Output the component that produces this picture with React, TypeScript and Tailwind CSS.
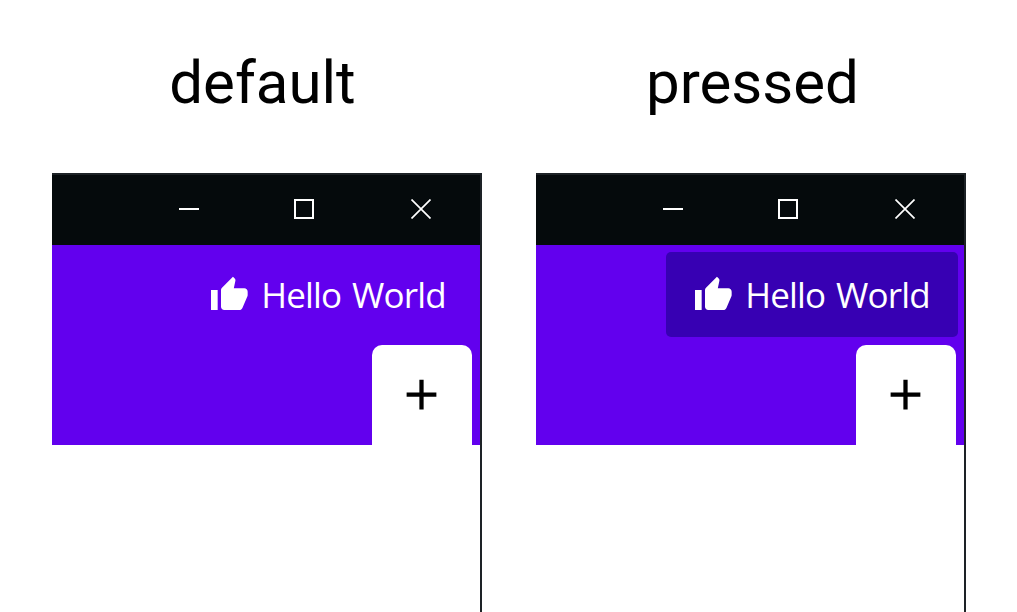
const ThumbUp = () => (
  <svg viewBox="-0.2 0 24 24" className="size-10 shrink-0" fill="#fff">
    <path d="M1 21h4V9H1v12zm22-11c0-1.1-.9-2-2-2h-6.31l.95-4.57.03-.32c0-.41-.17-.79-.44-1.06L14.17 1 7.59 7.59C7.22 7.95 7 8.45 7 9v10c0 1.1.9 2 2 2h9c.83 0 1.54-.5 1.84-1.22l3.02-7.05c.09-.23.14-.47.14-.73v-2z" />
  </svg>
);

const TitleBar = () => (
  <div className="flex h-[70px] items-start bg-[#050a0c] pl-[127px] pt-[24px]">
    <svg width="20" height="20" className="shrink-0" fill="#fff">
      <rect y="9" width="20" height="2" />
    </svg>
    <svg width="20" height="20" className="ml-[95px] shrink-0" fill="none" stroke="#fff" strokeWidth="2">
      <rect x="1" y="1" width="18" height="18" />
    </svg>
    <svg width="20" height="20" className="ml-[97px] shrink-0" fill="none" stroke="#fff" strokeWidth="1.7">
      <path d="M.5.5l19 19M19.5.5l-19 19" />
    </svg>
  </div>
);

function Example({ title, pressed = false }: { title: string; pressed?: boolean }) {
  return (
    <section className="flex w-[430px] flex-col">
      <h2
        className={`h-[173px] whitespace-nowrap pt-[48px] text-center font-['Roboto',sans-serif] text-[60px] font-normal leading-[70px] text-black ${pressed ? "pl-[3px]" : "pr-[9px]"}`}
      >
        {title}
      </h2>
      <div className="flex-1 border-r-2 border-t-2 border-[#1d2226] bg-white">
        <TitleBar />
        <div className="flex h-[200px] flex-col items-end bg-[#6200ee]">
          <button
            className={`mb-[0.7px] mr-[6px] mt-[7.3px] flex h-[85px] w-[292px] shrink-0 items-center rounded-[5px] pl-[27px] ${pressed ? "bg-[#3700b3]" : ""}`}
          >
            <ThumbUp />
            <span className="ml-[12.3px] whitespace-nowrap font-['Open_Sans',sans-serif] text-[35px] leading-[48px] tracking-[-0.85px] text-white [word-spacing:2.6px]">
              Hello World
            </span>
          </button>
          <div className="mr-[8.3px] mt-[7px] flex h-[100px] w-[100px] justify-center rounded-t-[10px] bg-white pr-[1px] pt-[24px]">
            <svg viewBox="0 0 24 24" className="size-[51px]" fill="#000">
              <path d="M19 13h-6v6h-2v-6H5v-2h6V5h2v6h6v2z" />
            </svg>
          </div>
        </div>
      </div>
    </section>
  );
}

export default function App() {
  return (
    <main className="flex h-[612px] w-[1017px] gap-[54px] overflow-hidden bg-white pl-[52px]">
      <Example title="default" />
      <Example title="pressed" pressed />
    </main>
  );
}
